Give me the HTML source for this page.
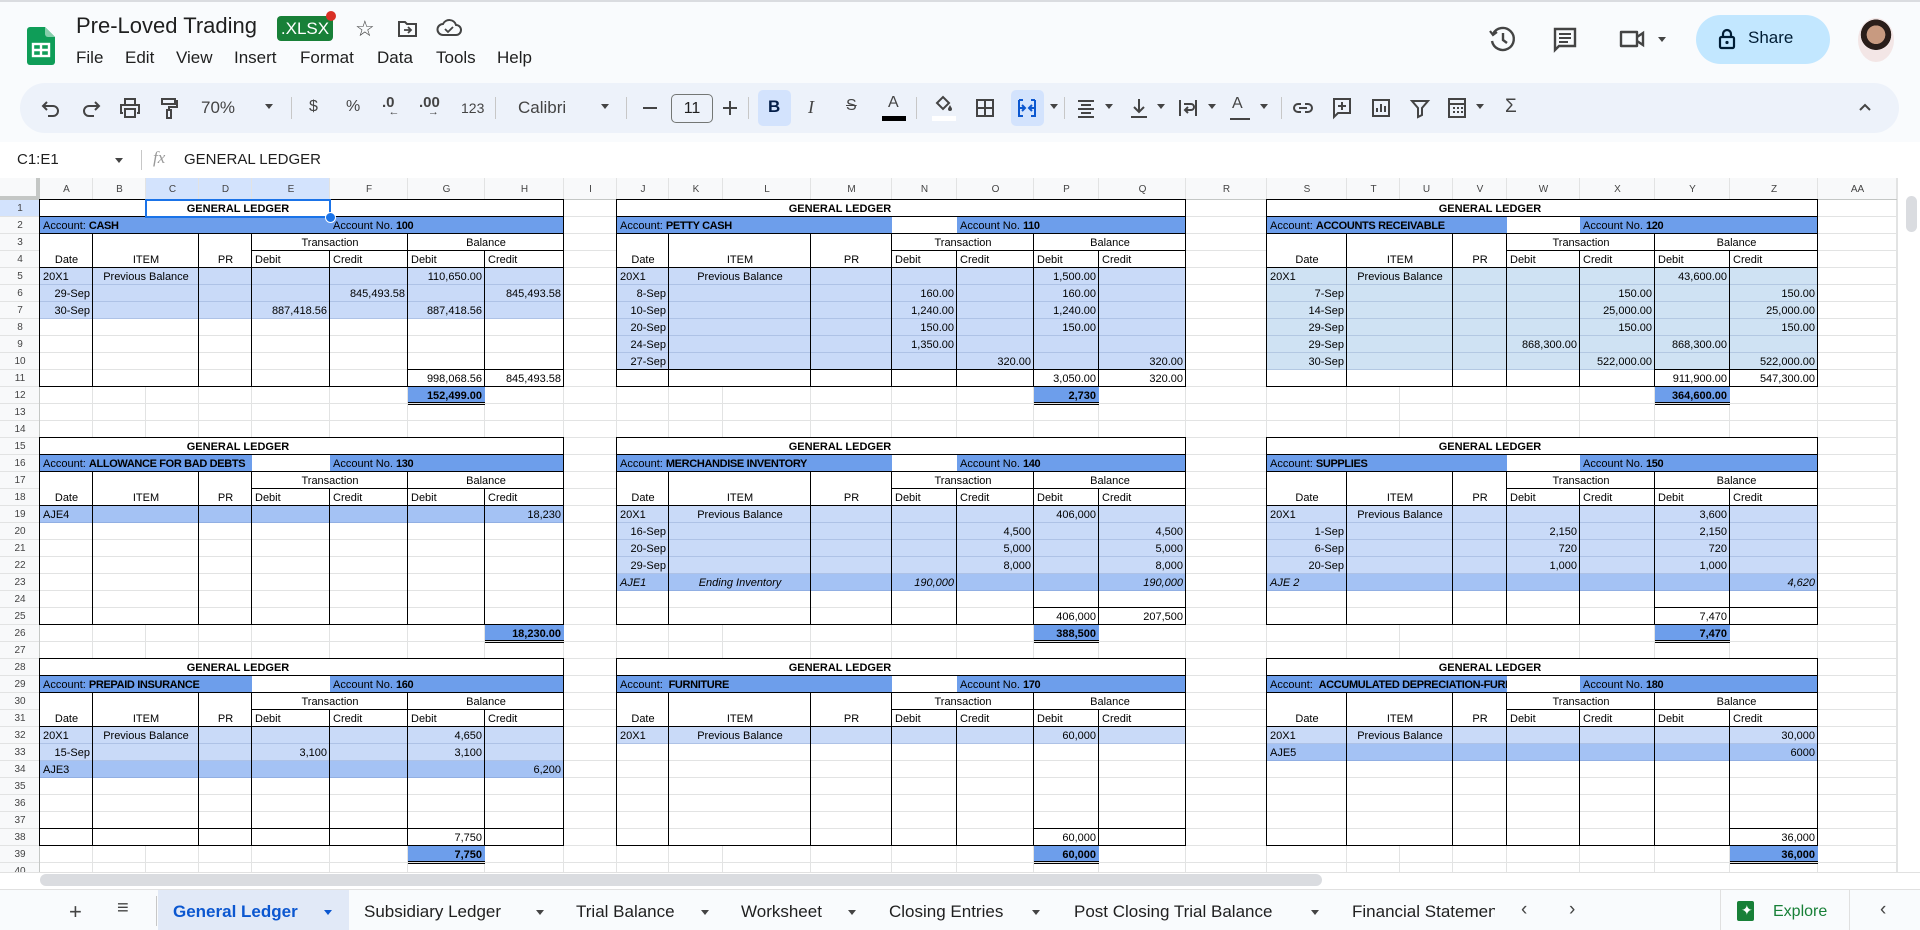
<!DOCTYPE html>
<html><head><meta charset="utf-8">
<style>
*{margin:0;padding:0;box-sizing:border-box}
body{width:1920px;height:930px;overflow:hidden;background:#f9fbfd;font-family:"Liberation Sans",sans-serif;position:relative}
#app{position:absolute;left:0;top:0;width:1920px;height:930px}
.t{position:absolute;white-space:nowrap;overflow:hidden;font:11px "Liberation Sans",sans-serif;padding:0 3px;color:#000}
.t b{letter-spacing:-0.35px}
.a{position:absolute;white-space:nowrap}
.ic{position:absolute;top:96px;width:24px;height:24px}
.ic svg{width:24px;height:24px}
.sep{position:absolute;top:97px;width:1px;height:22px;background:#c7c7c7}
.car{position:absolute;top:104px;width:0;height:0;border-left:4px solid transparent;border-right:4px solid transparent;border-top:5px solid #444}
</style></head><body>
<div id="app">
<div style="position:absolute;left:0;top:0;width:1920px;height:2px;background:#dadce0"></div>
<svg style="position:absolute;left:27px;top:27px" width="28" height="38" viewBox="0 0 28 38"><path d="M3 0h15l10 10v25a3 3 0 0 1-3 3H3a3 3 0 0 1-3-3V3a3 3 0 0 1 3-3z" fill="#0f9d58"/><path d="M18 0l10 10h-7a3 3 0 0 1-3-3z" fill="#87ceac"/><rect x="6" y="17" width="16" height="12" fill="none" stroke="#fff" stroke-width="2.4"/><path d="M6 23h16M14 17v12" stroke="#fff" stroke-width="2.4"/></svg>
<div class="a" style="left:76px;top:13px;font-size:22px;color:#1f1f1f">Pre-Loved Trading</div>
<div class="a" style="left:277px;top:16px;width:56px;height:25px;background:#188038;border-radius:4px;color:#fff;font-size:17px;line-height:25px;text-align:center">.XLSX</div>
<div class="a" style="left:326px;top:11px;width:10px;height:10px;border-radius:50%;background:#d93025"></div>
<div class="a" style="left:355px;top:16px;font-size:22px;color:#444">☆</div>
<svg class="a" style="left:397px;top:19px" width="22" height="20" viewBox="0 0 22 20"><path d="M2 3h6l2 2h9v12H2z" fill="none" stroke="#444" stroke-width="2"/><path d="M7 11h7M11 8l3 3-3 3" fill="none" stroke="#444" stroke-width="1.8"/></svg>
<svg class="a" style="left:436px;top:18px" width="26" height="20" viewBox="0 0 26 20"><path d="M7 17h13a5 5 0 0 0 0-10 7 7 0 0 0-13-1 5.5 5.5 0 0 0 0 11z" fill="none" stroke="#444" stroke-width="2"/><path d="M9 11l3 3 5-5" fill="none" stroke="#444" stroke-width="1.8"/></svg>
<div class="a" style="left:76px;top:48px;font-size:17px;color:#1f1f1f">File</div>
<div class="a" style="left:125px;top:48px;font-size:17px;color:#1f1f1f">Edit</div>
<div class="a" style="left:176px;top:48px;font-size:17px;color:#1f1f1f">View</div>
<div class="a" style="left:234px;top:48px;font-size:17px;color:#1f1f1f">Insert</div>
<div class="a" style="left:300px;top:48px;font-size:17px;color:#1f1f1f">Format</div>
<div class="a" style="left:377px;top:48px;font-size:17px;color:#1f1f1f">Data</div>
<div class="a" style="left:436px;top:48px;font-size:17px;color:#1f1f1f">Tools</div>
<div class="a" style="left:497px;top:48px;font-size:17px;color:#1f1f1f">Help</div>
<svg class="a" style="left:1488px;top:25px" width="28" height="28" viewBox="0 0 28 28"><path d="M5 9a11 11 0 1 1-1 7" fill="none" stroke="#444" stroke-width="2.4"/><path d="M2 6l3 4 4-3" fill="none" stroke="#444" stroke-width="2.2"/><path d="M15 8v7l4 3" fill="none" stroke="#444" stroke-width="2.4"/></svg>
<svg class="a" style="left:1552px;top:26px" width="26" height="28" viewBox="0 0 26 28"><path d="M3 3h20v17H7l-4 4z" fill="none" stroke="#444" stroke-width="2.4"/><path d="M7 8h12M7 12h12M7 16h9" stroke="#444" stroke-width="2"/></svg>
<svg class="a" style="left:1618px;top:27px" width="30" height="24" viewBox="0 0 30 24"><path d="M3 5h16v14H3z" fill="none" stroke="#444" stroke-width="2.4" stroke-linejoin="round"/><path d="M19 10l6-4v12l-6-4" fill="none" stroke="#444" stroke-width="2.4"/></svg>
<div class="car" style="left:1658px;top:37px"></div>
<div class="a" style="left:1696px;top:15px;width:134px;height:49px;border-radius:25px;background:#c2e7ff"></div>
<svg class="a" style="left:1718px;top:28px" width="18" height="22" viewBox="0 0 18 22"><rect x="2" y="9" width="14" height="11" rx="1.5" fill="none" stroke="#001d35" stroke-width="2.2"/><path d="M5 9V6a4 4 0 0 1 8 0v3" fill="none" stroke="#001d35" stroke-width="2.2"/><circle cx="9" cy="14.5" r="1.6" fill="#001d35"/></svg>
<div class="a" style="left:1748px;top:28px;font-size:17px;color:#001d35">Share</div>
<div class="a" style="left:1858px;top:18px;width:36px;height:44px;border-radius:50%;background:radial-gradient(circle at 50% 38%,#c89a80 0 28%,#2a1e1a 29% 46%,#f3e6e6 47%)"></div>
<div class="a" style="left:20px;top:83px;width:1879px;height:50px;border-radius:25px;background:#edf2fa"></div>
<div class="a" style="left:758px;top:90px;width:33px;height:36px;border-radius:5px;background:#d3e3fd"></div>
<div class="a" style="left:1011px;top:90px;width:33px;height:36px;border-radius:5px;background:#d3e3fd"></div>
<svg class="ic" style="left:39px" viewBox="0 0 24 24"><path d="M8 6L4 10l4 4M4 10h10a5 5 0 0 1 0 10h-5" fill="none" stroke="#444" stroke-width="2"/></svg>
<svg class="ic" style="left:79px" viewBox="0 0 24 24"><path d="M16 6l4 4-4 4M20 10H10a5 5 0 0 0 0 10h5" fill="none" stroke="#444" stroke-width="2"/></svg>
<svg class="ic" style="left:118px" viewBox="0 0 24 24"><path d="M7 8V3h10v5M5 17H3V9h18v8h-2M7 13h10v8H7z" fill="none" stroke="#444" stroke-width="2"/></svg>
<svg class="ic" style="left:157px" viewBox="0 0 24 24"><path d="M5 3h13v5H5zM18 5h2v6h-8v3M10 14h4v8h-4z" fill="none" stroke="#444" stroke-width="2"/></svg>
<div class="a" style="left:201px;top:98px;font-size:17px;color:#444">70%</div>
<div class="car" style="left:265px"></div>
<div class="sep" style="left:291px"></div>
<div class="a" style="left:309px;top:98px;font-size:16px;color:#444">$</div>
<div class="a" style="left:346px;top:98px;font-size:16px;color:#444">%</div>
<div class="a" style="left:382px;top:94px;font-size:15px;color:#444;font-weight:bold">.0<span style="font-size:11px;position:relative;left:-6px;top:8px">←</span></div>
<div class="a" style="left:419px;top:94px;font-size:15px;color:#444;font-weight:bold">.00<span style="font-size:11px;position:relative;left:-12px;top:8px">→</span></div>
<div class="a" style="left:461px;top:100px;font-size:14px;color:#444">123</div>
<div class="sep" style="left:495px"></div>
<div class="a" style="left:518px;top:98px;font-size:17px;color:#444">Calibri</div>
<div class="car" style="left:601px"></div>
<div class="sep" style="left:626px"></div>
<div class="a" style="left:643px;top:107px;width:14px;height:2px;background:#444"></div>
<div class="a" style="left:671px;top:94px;width:42px;height:29px;border:1px solid #747775;border-radius:5px;font-size:16px;line-height:27px;text-align:center;color:#1f1f1f">11</div>
<div class="a" style="left:723px;top:107px;width:14px;height:2px;background:#444"></div>
<div class="a" style="left:729px;top:101px;width:2px;height:14px;background:#444"></div>
<div class="sep" style="left:748px"></div>
<div class="a" style="left:768px;top:97px;font-size:17px;font-weight:bold;color:#041e49">B</div>
<div class="a" style="left:808px;top:97px;font-size:18px;font-style:italic;font-family:'Liberation Serif',serif;color:#444">I</div>
<div class="a" style="left:846px;top:97px;font-size:16px;color:#444;text-decoration:line-through">S</div>
<div class="a" style="left:888px;top:94px;font-size:16px;color:#444">A</div>
<div class="a" style="left:882px;top:116px;width:24px;height:5px;background:#000"></div>
<div class="sep" style="left:916px"></div>
<svg class="ic" style="left:932px;top:92px" viewBox="0 0 24 24"><path d="M5 11l6-6 6 6-6 6z" fill="none" stroke="#444" stroke-width="2"/><path d="M18 13c1 2 2 3 2 4a2 2 0 0 1-4 0c0-1 1-2 2-4z" fill="#444"/></svg>
<div class="a" style="left:932px;top:116px;width:24px;height:5px;background:#fff"></div>
<svg class="ic" style="left:973px" viewBox="0 0 24 24"><path d="M4 4h16v16H4zM12 4v16M4 12h16" fill="none" stroke="#444" stroke-width="2"/></svg>
<svg class="ic" style="left:1015px" viewBox="0 0 24 24"><path d="M4 4h4M4 4v16h4M20 4h-4M20 4v16h-4M3 12h7M7 9l3 3-3 3M21 12h-7M17 9l-3 3 3 3" fill="none" stroke="#0b57d0" stroke-width="2"/></svg>
<div class="car" style="left:1050px"></div>
<div class="sep" style="left:1064px"></div>
<svg class="ic" style="left:1074px" viewBox="0 0 24 24"><path d="M4 5h16M7 9h10M4 13h16M7 17h10M4 21h16" stroke="#444" stroke-width="2"/></svg>
<div class="car" style="left:1105px"></div>
<svg class="ic" style="left:1127px" viewBox="0 0 24 24"><path d="M12 3v13M7 11l5 5 5-5M4 21h16" fill="none" stroke="#444" stroke-width="2"/></svg>
<div class="car" style="left:1157px"></div>
<svg class="ic" style="left:1176px" viewBox="0 0 24 24"><path d="M4 4v16M20 4v16M8 8h7a3 3 0 0 1 0 6H10M12 11l-3 3 3 3" fill="none" stroke="#444" stroke-width="2"/></svg>
<div class="car" style="left:1208px"></div>
<div class="a" style="left:1232px;top:95px;font-size:16px;color:#444">A</div>
<div class="a" style="left:1230px;top:118px;width:20px;height:2px;background:#444"></div>
<div class="car" style="left:1260px"></div>
<div class="sep" style="left:1281px"></div>
<svg class="ic" style="left:1291px" viewBox="0 0 24 24"><path d="M10 8H7a4 4 0 0 0 0 8h3M14 8h3a4 4 0 0 1 0 8h-3M8 12h8" fill="none" stroke="#444" stroke-width="2"/></svg>
<svg class="ic" style="left:1330px" viewBox="0 0 24 24"><path d="M4 3h16v14H8l-4 4zM12 6v8M8 10h8" fill="none" stroke="#444" stroke-width="2"/></svg>
<svg class="ic" style="left:1369px" viewBox="0 0 24 24"><path d="M4 4h16v16H4zM8 16v-4M12 16V8M16 16v-6" fill="none" stroke="#444" stroke-width="2"/></svg>
<svg class="ic" style="left:1408px" viewBox="0 0 24 24"><path d="M4 5h16l-6 7v7l-4 2v-9z" fill="none" stroke="#444" stroke-width="2"/></svg>
<svg class="ic" style="left:1445px" viewBox="0 0 24 24"><path d="M4 3h16v18H4zM4 8h16M8 12h2M12 12h2M16 12h2M8 16h2M12 16h2M16 16h2" fill="none" stroke="#444" stroke-width="2"/></svg>
<div class="car" style="left:1476px"></div>
<div class="a" style="left:1505px;top:96px;font-size:19px;color:#444">Σ</div>
<svg class="ic" style="left:1853px" viewBox="0 0 24 24"><path d="M7 14l5-5 5 5" fill="none" stroke="#444" stroke-width="2"/></svg>
<div class="a" style="left:0;top:142px;width:1920px;height:36px;background:#fff"></div>
<div class="a" style="left:17px;top:151px;font-size:15px;color:#1f1f1f">C1:E1</div>
<div class="car" style="left:115px;top:158px"></div>
<div class="a" style="left:141px;top:150px;width:1px;height:20px;background:#c7c7c7"></div>
<div class="a" style="left:153px;top:148px;font-size:17px;color:#999;font-style:italic;font-family:'Liberation Serif',serif">fx</div>
<div class="a" style="left:184px;top:151px;font-size:15px;color:#1f1f1f">GENERAL LEDGER</div>
<div id="sheet" style="position:absolute;left:0;top:178px;width:1920px;height:694px;background:#fff;overflow:hidden"></div>
<div class="a" style="left:0;top:872px;width:1920px;height:17px;background:#fff;border-top:1px solid #e1e1e1"></div>
<div class="a" style="left:40px;top:874px;width:1282px;height:12px;border-radius:6px;background:#dadce0"></div>
<div class="a" style="left:0;top:889px;width:1920px;height:41px;background:#f9fbfd;border-top:1px solid #e0e0e0"></div>
<div class="a" style="left:158px;top:890px;width:191px;height:40px;background:#e1e9f7"></div>
<div class="a" style="left:69px;top:899px;font-size:22px;color:#444">+</div>
<div class="a" style="left:117px;top:897px;font-size:20px;color:#444">≡</div>
<div class="a" style="left:156px;top:896px;width:1px;height:30px;background:#c7c7c7"></div>
<div class="a" style="left:173px;top:902px;font-size:17px;color:#0b57d0;font-weight:bold">General Ledger</div>
<div class="car" style="left:324px;top:910px;border-top-color:#0b57d0"></div>
<div class="a" style="left:364px;top:902px;font-size:17px;color:#1f1f1f">Subsidiary Ledger</div><div class="car" style="left:536px;top:910px"></div>
<div class="a" style="left:576px;top:902px;font-size:17px;color:#1f1f1f">Trial Balance</div><div class="car" style="left:701px;top:910px"></div>
<div class="a" style="left:741px;top:902px;font-size:17px;color:#1f1f1f">Worksheet</div><div class="car" style="left:848px;top:910px"></div>
<div class="a" style="left:889px;top:902px;font-size:17px;color:#1f1f1f">Closing Entries</div><div class="car" style="left:1032px;top:910px"></div>
<div class="a" style="left:1074px;top:902px;font-size:17px;color:#1f1f1f">Post Closing Trial Balance</div><div class="car" style="left:1311px;top:910px"></div>
<div class="a" style="left:1352px;top:902px;width:143px;overflow:hidden;font-size:17px;color:#1f1f1f">Financial Statements</div>
<div class="a" style="left:1521px;top:899px;font-size:19px;color:#444">‹</div>
<div class="a" style="left:1569px;top:899px;font-size:19px;color:#444">›</div>
<div class="a" style="left:1720px;top:890px;width:1px;height:40px;background:#e0e0e0"></div>
<div class="a" style="left:1737px;top:901px;width:17px;height:20px;background:#188038;border-radius:2px"></div>
<div class="a" style="left:1741px;top:902px;font-size:14px;color:#fff">✦</div>
<div class="a" style="left:1773px;top:903px;font-size:16px;color:#188038">Explore</div>
<div class="a" style="left:1849px;top:890px;width:1px;height:40px;background:#e0e0e0"></div>
<div class="a" style="left:1880px;top:899px;font-size:19px;color:#444">‹</div>
</div>
<script>
const S=document.getElementById('sheet');
let H='';
const OY=178;
function R(x1,y1,x2,y2,bg){H+=`<div style="position:absolute;left:${x1}px;top:${y1-OY}px;width:${x2-x1}px;height:${y2-y1}px;background:${bg}"></div>`;}
function T(x1,x2,y,s,st){H+=`<div class="t" style="left:${x1}px;top:${y-OY}px;width:${x2-x1}px;height:17px;line-height:18px;${st||''}">${s}</div>`;}
const C=[40,93,146,199,252,330,408,485,564,617,669,723,811,892,957,1034,1099,1186,1267,1347,1400,1453,1507,1580,1655,1730,1818,1897];
const L=['A','B','C','D','E','F','G','H','I','J','K','L','M','N','O','P','Q','R','S','T','U','V','W','X','Y','Z','AA'];
const y=n=>200+(n-1)*17;
R(0,178,1897,200,'#f8f9fa');R(0,200,40,872,'#f8f9fa');
R(146,178,330,200,'#d3e3fd');R(0,200,40,217,'#d3e3fd');
for(let i=0;i<27;i++)T(C[i],C[i+1],181,L[i],'text-align:center;color:#444;font-size:10px');
for(let n=1;n<=40;n++)T(0,40,y(n),n,'text-align:center;color:#444;font-size:10px');
for(let k=0;k<=41;k++)R(0,y(1)+17*k-1,1897,y(1)+17*k,'#e2e3e3');
for(const x of C)R(x-1,178,x,872,'#e2e3e3');
R(0,199,1897,200,'#c4c7c5');R(39,178,40,872,'#c4c7c5');
R(0,178,40,200,'#f8f9fa');R(36,178,40,200,'#c4c7c5');R(0,196,40,200,'#c4c7c5');
const BLUE='#6d9eeb',LT='#c9daf8',MD='#a4c2f4';
function ledger(b,r0,o){
 const E=[C[b],C[b+1],C[b+3],C[b+4],C[b+5],C[b+6],C[b+7],C[b+8]];
 const end=o.end;
 o.rows.forEach((rw,i)=>{const n=r0+4+i;const f=rw[7];if(f){R(E[0],y(n),E[7],y(n)+17,f);R(E[0],y(n)+16,E[7],y(n)+17,'rgba(70,100,160,.2)');}});
 R(E[0],y(r0),E[7],y(r0+1),'#fff');
 R(E[0],y(r0+1),o.cashE?E[4]:E[3],y(r0+2),BLUE);
 if(!o.cashE)R(E[3],y(r0+1),E[4],y(r0+2),'#fff');
 R(E[4],y(r0+1),E[7],y(r0+2),BLUE);
 R(E[0],y(r0+2),E[7],y(r0+4),'#fff');
 for(let n=r0+4+o.rows.length;n<=end;n++)R(E[0],y(n),E[7],y(n+1)-1,'#fff');
 T(C[b+2],C[b+5],y(r0),'GENERAL LEDGER','text-align:center;font-weight:bold');
 T(E[0],o.cashE?E[4]:E[3],y(r0+1),'Account: <b>'+o.name+'</b>','padding-right:0');
 T(E[4],E[7],y(r0+1),'Account No. <b>'+o.no+'</b>');
 T(E[3],E[5],y(r0+2),'Transaction','text-align:center');
 T(E[5],E[7],y(r0+2),'Balance','text-align:center');
 T(E[0],E[1],y(r0+3),'Date','text-align:center');
 T(E[1],E[2],y(r0+3),'ITEM','text-align:center');
 T(E[2],E[3],y(r0+3),'PR','text-align:center');
 ['Debit','Credit','Debit','Credit'].forEach((s,i)=>T(E[3+i],E[4+i],y(r0+3),s));
 o.rows.forEach((rw,i)=>{const n=r0+4+i;const it=rw[8]?'font-style:italic;':'';
  for(let c=0;c<7;c++){const v=rw[c];if(!v)continue;let al='text-align:right';
   if(c==0)al=/^\d+-/.test(v)?'text-align:right':'text-align:left';
   if(c==1)al='text-align:center';
   T(E[c],E[c+1],y(n),v,al+';'+it);}});
 if(o.tot){const n=o.tot.row;for(const k in o.tot.v)T(E[k],E[+k+1],y(n),o.tot.v[k],'text-align:right');
  R(E[o.tot.l[0]],y(n)-1,E[o.tot.l[1]],y(n),'#000');}
 const K='#000';
 R(E[0],y(r0)-1,E[7],y(r0),K);R(E[0],y(r0+1)-1,E[7],y(r0+1),K);R(E[0],y(r0+2)-1,E[7],y(r0+2),K);
 R(E[3],y(r0+3)-1,E[7],y(r0+3),K);R(E[0],y(r0+4)-1,E[7],y(r0+4),K);R(E[0],y(end+1)-1,E[7],y(end+1),K);
 R(E[0]-1,y(r0)-1,E[0],y(end+1),K);R(E[7]-1,y(r0)-1,E[7],y(end+1),K);
 [1,2,3,5].forEach(i=>R(E[i]-1,y(r0+2),E[i],y(end+1),K));
 [4,6].forEach(i=>R(E[i]-1,y(r0+3),E[i],y(end+1),K));
 const f=o.fin,n=f.row;
 R(E[f.c],y(n),E[f.c+1],y(n)+16,BLUE);
 T(E[f.c],E[f.c+1],y(n),f.v,'text-align:right;font-weight:bold');
 R(E[f.c],y(n)+15,E[f.c+1],y(n)+16,K);R(E[f.c],y(n)+17,E[f.c+1],y(n)+18,K);
}
const e='';
ledger(0,1,{name:'CASH',no:'100',cashE:1,end:11,rows:[
 ['20X1','Previous Balance',e,e,e,'110,650.00',e,LT],
 ['29-Sep',e,e,e,'845,493.58',e,'845,493.58',LT],
 ['30-Sep',e,e,'887,418.56',e,'887,418.56',e,LT]],
 tot:{row:11,v:{5:'998,068.56',6:'845,493.58'},l:[5,7]},fin:{row:12,c:5,v:'152,499.00'}});
ledger(9,1,{name:'PETTY CASH',no:'110',end:11,rows:[
 ['20X1','Previous Balance',e,e,e,'1,500.00',e,LT],
 ['8-Sep',e,e,'160.00',e,'160.00',e,LT],
 ['10-Sep',e,e,'1,240.00',e,'1,240.00',e,LT],
 ['20-Sep',e,e,'150.00',e,'150.00',e,LT],
 ['24-Sep',e,e,'1,350.00',e,e,e,LT],
 ['27-Sep',e,e,e,'320.00',e,'320.00',LT]],
 tot:{row:11,v:{5:'3,050.00',6:'320.00'},l:[0,7]},fin:{row:12,c:5,v:'2,730'}});
const AR='#cfe2f3';
ledger(18,1,{name:'ACCOUNTS RECEIVABLE',no:'120',end:11,rows:[
 ['20X1','Previous Balance',e,e,e,'43,600.00',e,AR],
 ['7-Sep',e,e,e,'150.00',e,'150.00',AR],
 ['14-Sep',e,e,e,'25,000.00',e,'25,000.00',AR],
 ['29-Sep',e,e,e,'150.00',e,'150.00',AR],
 ['29-Sep',e,e,'868,300.00',e,'868,300.00',e,AR],
 ['30-Sep',e,e,e,'522,000.00',e,'522,000.00',AR]],
 tot:{row:11,v:{5:'911,900.00',6:'547,300.00'},l:[5,7]},fin:{row:12,c:5,v:'364,600.00'}});
ledger(0,15,{name:'ALLOWANCE FOR BAD DEBTS',no:'130',end:25,rows:[
 ['AJE4',e,e,e,e,e,'18,230',MD]],fin:{row:26,c:6,v:'18,230.00'}});
ledger(9,15,{name:'MERCHANDISE INVENTORY',no:'140',end:25,rows:[
 ['20X1','Previous Balance',e,e,e,'406,000',e,LT],
 ['16-Sep',e,e,e,'4,500',e,'4,500',LT],
 ['20-Sep',e,e,e,'5,000',e,'5,000',LT],
 ['29-Sep',e,e,e,'8,000',e,'8,000',LT],
 ['AJE1','Ending Inventory',e,'190,000',e,e,'190,000',MD,1]],
 tot:{row:25,v:{5:'406,000',6:'207,500'},l:[5,7]},fin:{row:26,c:5,v:'388,500'}});
ledger(18,15,{name:'SUPPLIES',no:'150',end:25,rows:[
 ['20X1','Previous Balance',e,e,e,'3,600',e,LT],
 ['1-Sep',e,e,'2,150',e,'2,150',e,LT],
 ['6-Sep',e,e,'720',e,'720',e,LT],
 ['20-Sep',e,e,'1,000',e,'1,000',e,LT],
 ['AJE 2',e,e,e,e,e,'4,620',MD,1]],
 tot:{row:25,v:{5:'7,470'},l:[5,7]},fin:{row:26,c:5,v:'7,470'}});
ledger(0,28,{name:'PREPAID INSURANCE',no:'160',end:38,rows:[
 ['20X1','Previous Balance',e,e,e,'4,650',e,LT],
 ['15-Sep',e,e,'3,100',e,'3,100',e,LT],
 ['AJE3',e,e,e,e,e,'6,200',MD]],
 tot:{row:38,v:{5:'7,750'},l:[0,7]},fin:{row:39,c:5,v:'7,750'}});
ledger(9,28,{name:'&nbsp;FURNITURE',no:'170',end:38,rows:[
 ['20X1','Previous Balance',e,e,e,'60,000',e,LT]],
 tot:{row:38,v:{5:'60,000'},l:[5,7]},fin:{row:39,c:5,v:'60,000'}});
ledger(18,28,{name:'&nbsp;ACCUMULATED DEPRECIATION-FURNITURE',no:'180',end:38,rows:[
 ['20X1','Previous Balance',e,e,e,e,'30,000',LT],
 ['AJE5',e,e,e,e,e,'6000',MD]],
 tot:{row:38,v:{6:'36,000'},l:[6,7]},fin:{row:39,c:6,v:'36,000'}});
H+=`<div style="position:absolute;left:145px;top:${200-OY-1}px;width:186px;height:19px;border:2px solid #1a73e8"></div>`;
H+=`<div style="position:absolute;left:325px;top:${217-OY-5}px;width:11px;height:11px;border-radius:50%;background:#1a73e8;border:1px solid #fff"></div>`;
H+=`<div style="position:absolute;left:1897px;top:0;width:23px;height:694px;background:#fff;border-left:1px solid #e2e3e3"></div>`;
H+=`<div style="position:absolute;left:1906px;top:18px;width:11px;height:36px;border-radius:6px;background:#dadce0"></div>`;
S.innerHTML=H;
</script>
</body></html>
